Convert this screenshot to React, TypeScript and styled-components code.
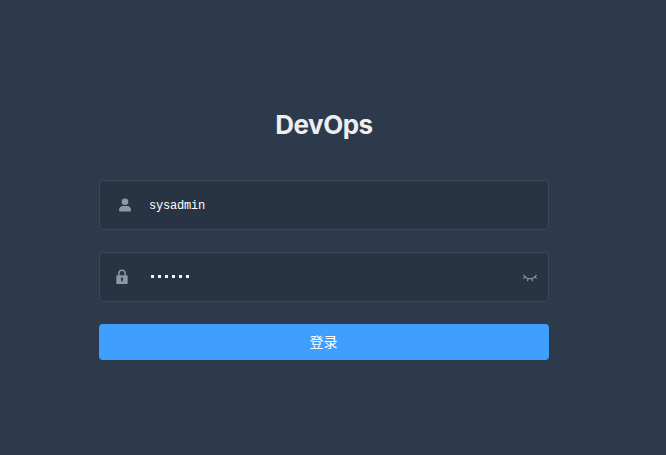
import React from 'react';
import styled, { createGlobalStyle } from 'styled-components';

const GlobalStyle = createGlobalStyle`
  * { box-sizing: border-box; }
  body { margin: 0; background: #2d3a4b; }
`;

const Page = styled.main`
  height: 455px;
  overflow: hidden;
  background: #2d3a4b;
  padding: 110px 0 0 99px;
`;

const LoginForm = styled.form`
  display: flex;
  flex-direction: column;
  width: 450px;
`;

const Title = styled.h1`
  margin: 0 0 40px;
  height: 30px;
  font: bold 26px/30px Inter, 'Liberation Sans', sans-serif;
  letter-spacing: -0.5px;
  color: #eee;
  text-align: center;
`;

const Field = styled.div`
  display: flex;
  align-items: center;
  height: 50px;
  margin-bottom: 22px;
  border: 1px solid rgba(255, 255, 255, 0.1);
  border-radius: 5px;
  background: #283443;
`;

const IconSlot = styled.span<{ $inset: number }>`
  display: flex;
  width: 49px;
  padding-left: ${({ $inset }) => $inset}px;
  color: #889aa4;
`;

const Value = styled.span`
  flex: 1;
  padding-top: 2px;
  font: 12px/16px 'Liberation Mono', 'Courier New', monospace;
  letter-spacing: -0.2px;
  color: #fff;
`;

const Mask = styled.span`
  display: flex;
  flex: 1;
  gap: 4px;
  padding: 0 0 1px 2px;
`;

const MaskDot = styled.i`
  width: 3px;
  height: 3px;
  background: #f4f4f4;
`;

const Toggle = styled.span`
  display: flex;
  margin-right: 11px;
  padding-top: 2px;
  color: #889aa4;
`;

const LoginButton = styled.button`
  height: 36px;
  padding: 0 1px 2px 0;
  border: 0;
  border-radius: 4px;
  background: #409eff;
  color: #fff;
  font: 14px/34px 'Noto Sans CJK SC', sans-serif;
`;

const UserIcon = () => (
  <svg width="12" height="14" viewBox="0 0 12 14" fill="currentColor">
    <circle cx="6" cy="3.7" r="3.3" />
    <path d="M4 8h4c2.500 0 4 1.800 4 4.100 0 1-.7 1.500-1.700 1.500H1.700C.7 13.600 0 13.100 0 12.100 0 9.800 1.500 8 4 8z" />
  </svg>
);

const LockIcon = () => (
  <svg width="12" height="16" viewBox="0 0 12 16" fill="none">
    <path d="M2.900 6.500V4.400a3.100 3.100 0 0 1 6.200 0v2.100" stroke="currentColor" strokeWidth="1.500" />
    <path
      fill="currentColor"
      fillRule="evenodd"
      d="M1.300 6.300h9.400c.6 0 1 .4 1 1v6.800c0 .6-.4 1-1 1H1.300c-.6 0-1-.4-1-1V7.300c0-.6.4-1 1-1zM6 8.600a1.200 1.200 0 0 0-.7 2.200v1.800h1.400v-1.800A1.200 1.200 0 0 0 6 8.600z"
    />
  </svg>
);

const ClosedEyeIcon = () => (
  <svg width="14" height="8" viewBox="0 0 14 8" fill="none" stroke="currentColor" strokeWidth="1.100">
    <path d="M.4.900C3.500 6.100 10.500 6.100 13.600.900M2.200 3.200.4 4.700M11.800 3.200l1.800 1.500M5 4.700l-.6 2.400M9 4.700l.6 2.400" />
  </svg>
);

export default function App() {
  return (
    <>
      <GlobalStyle />
      <Page>
        <LoginForm>
          <Title>DevOps</Title>
          <Field>
            <IconSlot $inset={19}><UserIcon /></IconSlot>
            <Value>sysadmin</Value>
          </Field>
          <Field>
            <IconSlot $inset={16}><LockIcon /></IconSlot>
            <Mask>
              {Array.from({ length: 6 }, (_, i) => <MaskDot key={i} />)}
            </Mask>
            <Toggle><ClosedEyeIcon /></Toggle>
          </Field>
          <LoginButton type="button">登录</LoginButton>
        </LoginForm>
      </Page>
    </>
  );
}
